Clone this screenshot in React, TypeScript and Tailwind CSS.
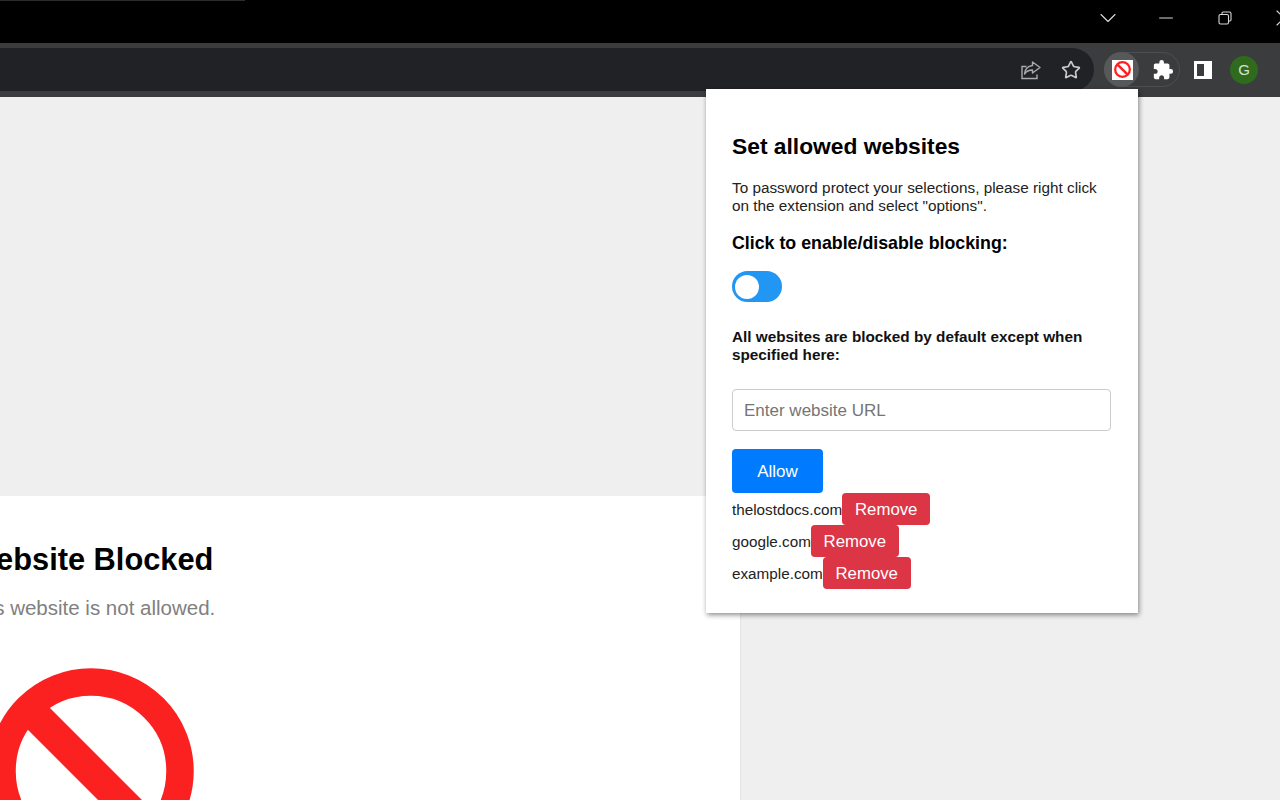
import React from 'react';
import { ChevronDown, Minus, Star, X } from 'lucide-react';
import { MdExtension } from 'react-icons/md';

const sites = ['thelostdocs.com', 'google.com', 'example.com'];

const NoEntry: React.FC<{ className?: string }> = ({ className }) => (
  <svg viewBox="0 0 206 206" className={className}>
    <circle cx="103" cy="103" r="89" fill="none" stroke="#fc2121" strokeWidth="27.5" />
    <line x1="40" y1="40" x2="166" y2="166" stroke="#fc2121" strokeWidth="31" />
  </svg>
);

const Toolbar: React.FC = () => (
  <div className="h-[54px] shrink-0 bg-[#3b3c3e] flex pt-[5px] pb-[6px]">
    {/* Omnibox */}
    <div className="w-[1094px] bg-[#212226] rounded-r-[22px] flex items-center justify-end gap-[19px] pr-[13px] shrink-0">
      <svg viewBox="0 0 22 22" className="w-[22px] h-[22px] text-[#a9abae]" fill="none" stroke="currentColor" strokeWidth="1.4">
        <path d="M6.5 7.5H2v12h15v-4" />
        <path d="M12.5 3l7.5 5.5-7.5 5.5v-3c-3.5 0-6 1-8 4 .5-5 3.5-8 8-8.5z" strokeLinejoin="round" />
      </svg>
      <Star className="w-[20px] h-[20px] text-[#c9cbce]" strokeWidth={2} />
    </div>
    {/* Extensions pill */}
    <div className="ml-[10px] mt-[4px] h-[35px] w-[76px] rounded-full border border-[#4d4e50] flex items-center">
      <div className="w-[35px] h-[35px] -ml-px pl-[2px] rounded-full bg-[#57585a] flex items-center justify-center shrink-0">
        <div className="w-[21px] h-[20px] shrink-0 bg-white flex items-center justify-center">
          <NoEntry className="w-[17px] h-[17px]" />
        </div>
      </div>
      <MdExtension className="ml-[13px] w-[22px] h-[22px] text-white shrink-0" />
    </div>
    <div className="ml-[14px] mt-[13px] w-[18px] h-[18px] border-[3px] border-white flex justify-end">
      <div className="w-[5px] bg-white" />
    </div>
    <div className="ml-[18px] mt-[8px] w-[28px] h-[28px] rounded-full bg-[#2f6a1d] text-[#d5e3cf] text-[15px] flex items-center justify-center">
      G
    </div>
  </div>
);

export default function App() {
  return (
    <div className="w-[1280px] h-[800px] relative overflow-hidden flex flex-col bg-[#efefef] font-['Liberation_Sans',Arial,sans-serif]">
      {/* Title bar */}
      <div className="h-[43px] bg-black flex flex-col shrink-0">
        <div className="h-px w-[245px] bg-[#2b2c2e]" />
        <div className="flex-1 flex items-center justify-end text-[#d8d8d8] pb-[8px]">
          <ChevronDown className="w-[28px] h-[28px] shrink-0" strokeWidth={1} />
          <Minus className="ml-[33px] w-[22px] h-[22px] shrink-0" strokeWidth={1.2} />
          <svg viewBox="0 0 14 14" className="ml-[41px] w-[14px] h-[14px] shrink-0" fill="none" stroke="currentColor" strokeWidth="1.1">
            <rect x="1" y="3.5" width="9.5" height="9.5" rx="1.5" />
            <path d="M4 3.5V2.2C4 1.5 4.5 1 5.2 1h6.3C12.3 1 13 1.7 13 2.5v6.3c0 .7-.5 1.2-1.2 1.2h-1.3" />
          </svg>
          <X className="ml-[38px] -mr-[18px] w-[28px] h-[28px] shrink-0" strokeWidth={1} />
        </div>
      </div>
      <Toolbar />
      {/* Page behind the popup */}
      <div className="flex-1 min-h-0 pt-[399px]">
        <div className="w-[1300px] -ml-[559px] h-[400px] bg-white border-r border-[#e4e4e4] flex flex-col items-center">
          <h1 className="mt-[46px] text-[30.8px] leading-[36px] font-bold text-black">Website Blocked</h1>
          <p className="mt-[18px] text-[20.5px] leading-[24px] text-[#808080]">This website is not allowed.</p>
          <NoEntry className="mt-[48px] w-[206px] h-[206px] shrink-0" />
        </div>
      </div>
      {/* Extension popup */}
      <div className="absolute left-[706px] top-[89px] w-[432px] h-[524px] bg-white shadow-[1px_2px_5px_rgba(0,0,0,0.45)] pl-[26px] pr-[27px] pt-[43px]">
        <h2 className="text-[22.8px] leading-[28px] font-bold text-black">Set allowed websites</h2>
        <p className="mt-[19px] text-[15.3px] leading-[18px] text-[#222]">
          To password protect your selections, please right click
          <br />
          on the extension and select "options".
        </p>
        <h3 className="mt-[18px] text-[17.8px] leading-[20px] font-bold text-black">Click to enable/disable blocking:</h3>
        <div className="mt-[18px] w-[50px] h-[31px] rounded-full bg-[#2196f3] flex items-center pl-[3px]">
          <div className="w-[24px] h-[24px] rounded-full bg-white" />
        </div>
        <h4 className="mt-[26px] text-[15.3px] leading-[18px] font-bold text-[#111]">
          All websites are blocked by default except when
          <br />
          specified here:
        </h4>
        <input
          placeholder="Enter website URL"
          className="mt-[25px] block w-[379px] h-[42px] border border-[#ccc] rounded-[4px] px-[11px] pt-[2px] text-[17px] placeholder:text-[#757575] outline-none"
        />
        <button className="mt-[18px] block w-[91px] h-[44px] pt-[2px] bg-[#007bff] rounded-[4px] text-white text-[17px]">Allow</button>
        <ul>
          {sites.map((site) => (
            <li key={site} className="h-[32px] flex items-center text-[15.25px] text-[#222]">
              <span className="pt-[2px]">{site}</span>
              <span className="h-[32px] w-[88px] pt-[2px] justify-center rounded-[4px] bg-[#dc3545] text-white text-[16.8px] flex items-center">Remove</span>
            </li>
          ))}
        </ul>
      </div>
    </div>
  );
}
